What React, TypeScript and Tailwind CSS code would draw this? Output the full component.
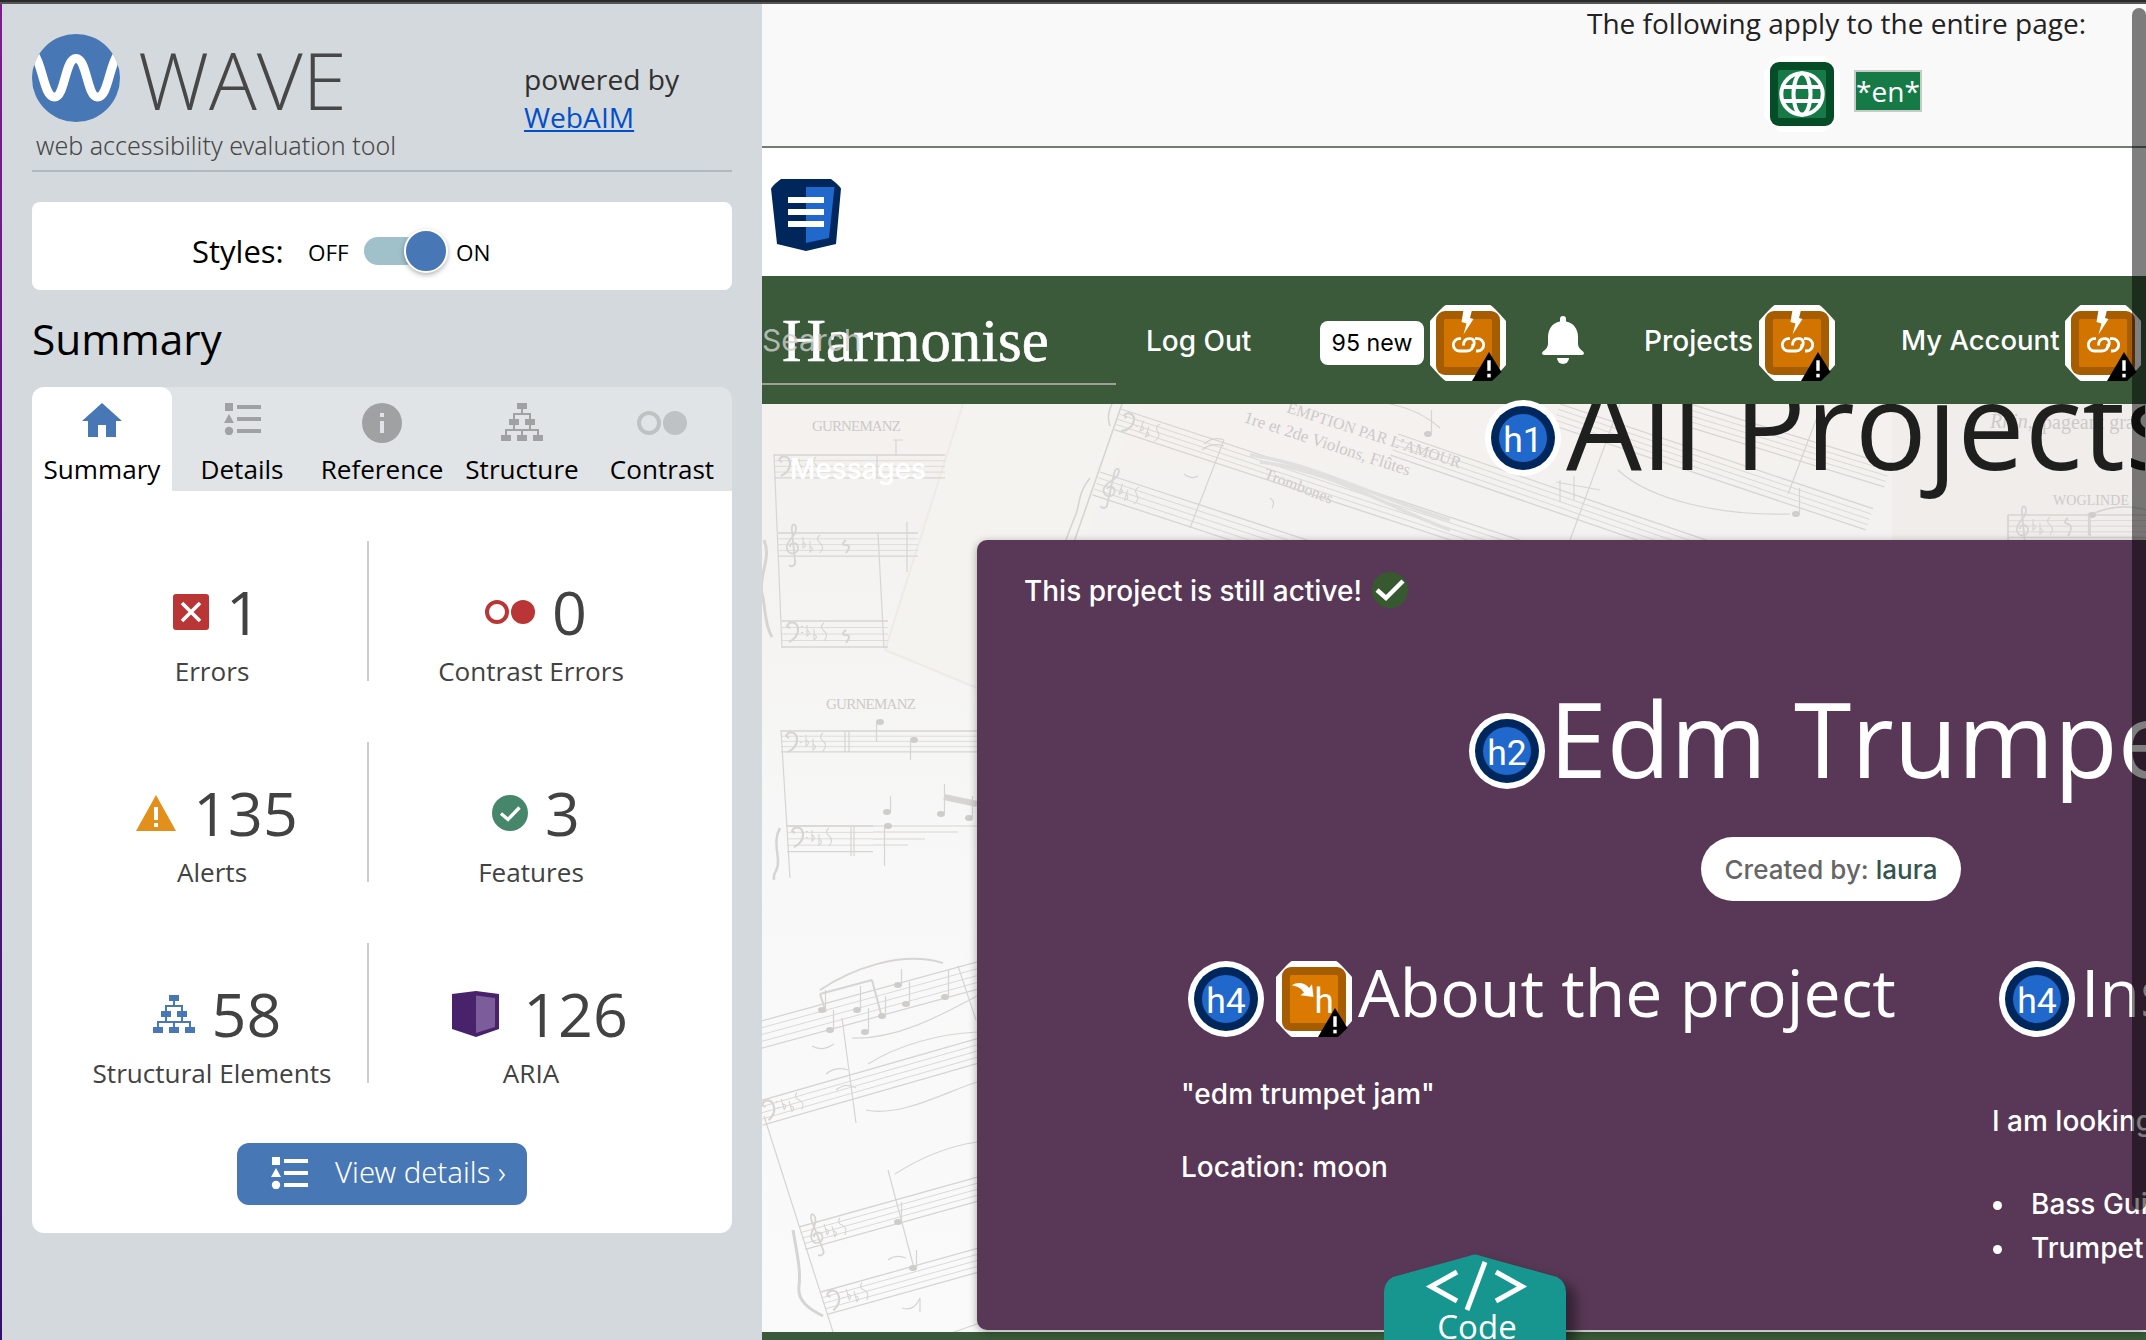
import type { ReactNode } from "react";

const SANS = "font-['Open_Sans','Noto_Sans',sans-serif]";
const UI = "font-['Inter','Liberation_Sans',sans-serif]";

/* ---------- Sidebar icons ---------- */

function WaveLogo() {
  return (
    <svg width="88" height="88" viewBox="0 0 88 88" className="shrink-0">
      <clipPath id="logo-disc">
        <circle cx="44" cy="44" r="44" />
      </clipPath>
      <circle cx="44" cy="44" r="44" fill="#4877b6" />
      <path
        d="M2 20C11 32 12 63 22.500 63S33 24.500 44 24.500 55 63 65.500 63 77 32 86 20"
        fill="none"
        stroke="#fff"
        strokeWidth="9"
        clipPath="url(#logo-disc)"
      />
    </svg>
  );
}

function HomeIcon() {
  return (
    <svg width="40" height="34" viewBox="0 0 40 34" fill="#4877b6">
      <path d="M20 0 40 18H34V34H24V22H16V34H6V18H0Z" />
    </svg>
  );
}

function ListIcon({ color }: { color: string }) {
  return (
    <svg width="37" height="32" viewBox="0 0 37 32" fill={color} className="shrink-0">
      <rect x="1" y="0" width="8" height="8" />
      <path d="M0 20 5 11 10 20Z" />
      <circle cx="5" cy="28" r="4.2" />
      <rect x="13" y="2" width="24" height="4" />
      <rect x="13" y="14" width="24" height="4" />
      <rect x="13" y="26" width="24" height="4" />
    </svg>
  );
}

function InfoIcon() {
  return (
    <svg width="40" height="40" viewBox="0 0 40 40">
      <circle cx="20" cy="20" r="20" fill="#9fa1a3" />
      <rect x="18" y="10" width="4" height="4" fill="#e1e4e6" />
      <rect x="18" y="18" width="4" height="12" fill="#e1e4e6" />
    </svg>
  );
}

function StructureIcon({ color }: { color: string }) {
  return (
    <svg width="42" height="38" viewBox="0 0 42 38" fill={color}>
      <rect x="16" y="0" width="10" height="6" />
      <rect x="8" y="16" width="10" height="6" />
      <rect x="24" y="16" width="10" height="6" />
      <rect x="0" y="32" width="10" height="6" />
      <rect x="16" y="32" width="10" height="6" />
      <rect x="32" y="32" width="10" height="6" />
      <path
        d="M21 5V11M13 17V11H29V17M13 21V27M29 21V27M5 33V27H37V33M21 33V27"
        fill="none"
        stroke={color}
        strokeWidth="2"
      />
    </svg>
  );
}

function ContrastIcon({ color }: { color: string }) {
  return (
    <svg width="50" height="24" viewBox="0 0 50 24">
      <circle cx="12" cy="12" r="10" fill="none" stroke={color} strokeWidth="4" />
      <circle cx="38" cy="12" r="12" fill={color} />
    </svg>
  );
}

function ErrorIcon() {
  return (
    <svg width="36" height="36" viewBox="0 0 36 36">
      <rect width="36" height="36" rx="3" fill="#b93536" />
      <path d="M9 9 27 27M27 9 9 27" stroke="#fff" strokeWidth="3.6" />
    </svg>
  );
}

function AlertIcon() {
  return (
    <svg width="40" height="36" viewBox="0 0 40 36">
      <path d="M20 0 40 36H0Z" fill="#e28f1b" />
      <rect x="18" y="12" width="4" height="13" fill="#fff" />
      <rect x="18" y="28" width="4" height="4" fill="#fff" />
    </svg>
  );
}

function FeatureIcon() {
  return (
    <svg width="36" height="36" viewBox="0 0 36 36">
      <circle cx="18" cy="18" r="18" fill="#46866a" />
      <path d="M9 18.5 16 24.5 27.500 12.500" fill="none" stroke="#fff" strokeWidth="3.4" />
    </svg>
  );
}

function AriaIcon() {
  return (
    <svg width="54" height="46" viewBox="0 0 54 46">
      <path d="M0 3 24 0 47 3V38L24 46 0 38Z" fill="#48226a" />
      <path d="M24 4.500 43 7V36L24 42Z" fill="#7d5c9c" />
    </svg>
  );
}

/* ---------- Page annotation icons ---------- */

const OCTAGON = "M16 0H60Q62 0 76 16V60Q62 76 60 76H16Q14 76 0 60V16Q14 0 16 0Z";

function AlertCorner() {
  return (
    <>
      <path d="M42 76 59 47 71.500 67 62 76Z" fill="#000" />
      <rect x="57.300" y="55.300" width="3.400" height="10.500" fill="#fff" />
      <rect x="57.300" y="68.800" width="3.400" height="3.600" fill="#fff" />
    </>
  );
}

function BrokenLinkIcon() {
  return (
    <svg width="76" height="76" viewBox="0 0 76 76" className="shrink-0">
      <path d={OCTAGON} fill="#fff" />
      <rect x="6" y="6" width="64" height="64" rx="9" fill="#a65c00" />
      <rect x="14" y="14" width="48" height="48" rx="1.500" fill="#d17500" />
      <path d="M33.500 5H42L40 13 43.500 14 33.500 29.500 36.500 18.500 31.500 17Z" fill="#fff" />
      <path
        d="M34.500 46H29.500a6.200 6.200 0 0 1 0-12.400H31M33.500 40.500c0-4.500 2-6.900 6-6.900h.5c5.500 0 5 6.500 2 9.500M45 33.600H47.500a6.200 6.200 0 0 1 0 12.400H46M43 39c0 4.500-2 7-6 7h-3"
        fill="none"
        stroke="#fff"
        strokeWidth="2.800"
      />
      <AlertCorner />
    </svg>
  );
}

function SkippedHeadingIcon() {
  return (
    <svg width="76" height="76" viewBox="0 0 76 76" className="shrink-0">
      <path d={OCTAGON} fill="#fff" />
      <rect x="6" y="6" width="64" height="64" rx="9" fill="#a65c00" />
      <rect x="14" y="14" width="48" height="48" rx="1.500" fill="#db7a00" />
      <path
        d="M16 24.500C21 20.500 29 21.500 33 27L36 23.300 37.500 36 24.500 34.300 28 31.500C25 27 21 25 16 24.500Z"
        fill="#fff"
      />
      <text x="38.500" y="51.700" fontSize="35" fill="#fff" className="font-['Roboto',sans-serif]">
        h
      </text>
      <AlertCorner />
    </svg>
  );
}

function HeadingBadge({ level }: { level: string }) {
  return (
    <svg width="76" height="76" viewBox="0 0 76 76" className="relative shrink-0">
      <circle cx="38" cy="38" r="38" fill="#fff" />
      <circle cx="38" cy="38" r="32" fill="#00275c" />
      <circle cx="38" cy="38" r="24" fill="#2068cc" />
      <text
        x="38"
        y="51.500"
        fontSize="35.500"
        textAnchor="middle"
        fill="#fff"
        className="font-['Roboto',sans-serif]"
      >
        {level}
      </text>
    </svg>
  );
}

function LanguageIcon() {
  return (
    <svg width="76" height="76" viewBox="0 0 76 76" className="shrink-0">
      <path d={OCTAGON} fill="#fff" />
      <rect x="6" y="6" width="64" height="64" rx="9" fill="#044d26" />
      <rect x="14" y="14" width="48" height="48" rx="1.500" fill="#167a47" />
      <g fill="none" stroke="#fff" strokeWidth="4">
        <circle cx="38" cy="38" r="20.700" />
        <ellipse cx="38" cy="38" rx="8.500" ry="20.700" />
        <path d="M19 31H57M19 45H57" />
      </g>
    </svg>
  );
}

function NavigationIcon() {
  return (
    <svg width="70" height="72" viewBox="0 0 70 72">
      <path d="M10 0H60Q68 6 70 9.500L65 65 35 72 6 65 0 9.500Q3 5 10 0Z" fill="#00275c" />
      <path d="M35 8H63.500L58 59 35 64Z" fill="#2068cc" />
      <path d="M17 18H53V24H17ZM17 30H53V36H17ZM17 42H53V48H17Z" fill="#fff" />
    </svg>
  );
}

function BellIcon() {
  return (
    <svg width="42" height="48" viewBox="0 0 42 48" fill="#fff" className="shrink-0">
      <path d="M18 3a3 3 0 0 1 6 0V5.500C32 7 36 13.500 36 21V28C36 31 38 33 41 35.500 43 37.500 41.500 39 40 39H2C.5 39-1 37.500 1 35.500 4 33 6 31 6 28V21C6 13.500 10 7 18 5.500Z" />
      <path d="M15 42H27A6 6 0 0 1 15 42Z" />
    </svg>
  );
}

/* ---------- Sheet music backdrop ---------- */

type StaffProps = { x: number; y: number; w: number; gap: number; angle?: number; clef?: "g" | "f" };

function Staff({ x, y, w, gap, angle = 0, clef }: StaffProps) {
  return (
    <g transform={`translate(${x} ${y}) rotate(${angle})`}>
      {[0, 1, 2, 3, 4].map((i) => (
        <path key={i} d={`M0 ${i * gap}H${w}`} strokeWidth={i % 4 === 0 ? 1.3 : 0.8} />
      ))}
      {clef === "g" && (
        <path
          d="M11 32c3 3 7 0 6-4L14-2c-1-8 4-9 4-2 0 8-11 12-9 20 2 7 12 5 11-2-1-5-8-5-8 0"
          strokeWidth="1.8"
        />
      )}
      {clef === "f" && <path d="M5 6c0-6 11-7 11 3 0 6-5 10-9 12M6 6l2 1M20 5v1M20 11v1" strokeWidth="2.2" />}
      {clef && <path d="M25 4v11q5-3 0-6M32 8v11q5-3 0-6M42 2q-5 4 0 8t0 10" strokeWidth="1.1" />}
    </g>
  );
}

function Note({ x, y, h }: { x: number; y: number; h: number }) {
  return (
    <g>
      <ellipse cx={x} cy={y} rx="4" ry="3" fill="#cfcdcb" stroke="none" />
      <path d={`M${x + (h < 0 ? 3.5 : -3.5)} ${y}v${h}`} />
    </g>
  );
}

function SheetMusic() {
  return (
    <svg
      className="absolute inset-0"
      width="1384"
      height="928"
      viewBox="762 404 1384 928"
      fill="none"
      stroke="#d7d5d3"
      strokeWidth="1.2"
    >
      <defs>
        <linearGradient id="paper" x1="0" y1="0" x2="0" y2="1">
          <stop offset="0" stopColor="#f5f1ee" />
          <stop offset=".12" stopColor="#f3f2f0" />
          <stop offset=".5" stopColor="#f8f8f8" />
          <stop offset="1" stopColor="#fafafa" />
        </linearGradient>
      </defs>
      <rect x="762" y="404" width="1384" height="928" fill="url(#paper)" stroke="none" />
      <path d="M963 404H1140L1075 560H977V688L885 650Z" fill="#f5f3f0" stroke="none" />
      <path d="M963 404 885 650 977 688" stroke="#eeeae6" strokeWidth="2" />
      <path d="M1892 404H2146V560H1892Z" fill="#f0edeb" stroke="none" />

      <g fill="#cccac8" stroke="none" className="font-['Liberation_Serif',serif]">
        <text x="812" y="431" fontSize="15" textLength="89">GURNEMANZ</text>
        <text x="826" y="709" fontSize="15" textLength="90">GURNEMANZ</text>
        <text x="2053" y="505" fontSize="14" textLength="76">WOGLINDE</text>
        <text x="1990" y="428" fontSize="20" fontStyle="italic">Rhin,</text>
        <text x="2042" y="429" fontSize="20">pageant gra</text>
        <text x="1286" y="412" fontSize="16" transform="rotate(18 1286 412)">EMPTION PAR L’AMOUR</text>
        <text x="1243" y="422" fontSize="17" transform="rotate(18 1243 422)">1re et 2de Violons, Flûtes</text>
        <text x="1263" y="478" fontSize="16" transform="rotate(21 1263 478)">Trombones</text>
      </g>

      {/* Left page, level staves */}
      <Staff x={774} y={455} w={171} gap={5.7} clef="f" />
      <Staff x={778} y={533} w={140} gap={5.8} clef="g" />
      <Staff x={782} y={621} w={106} gap={6.5} clef="f" />
      <path d="M774 454 782 648M877 455V478M878 533 884 648M896 440V455M907 522V572M893 440h10" />
      <path d="M764 540c8 18-6 36-2 54 4 14 2 30 10 43" strokeWidth="3" />
      <path d="M846 540q-6 5 0 5t0 8M846 630q-6 5 0 5t0 8" strokeWidth="2" />
      <Staff x={781} y={731} w={196} gap={5.2} clef="f" />
      <Staff x={787} y={826} w={86} gap={6.4} clef="f" />
      <path d="M787 826H977M873 832H958M873 839H925M873 845H908M781 730 790 878M845 731V752M849 731V752M851 826V856M854 826V856" />
      <path d="M780 828c-6 10-3 20-2 32s-6 12-4 20" strokeWidth="2.5" />
      <path d="M944 797 977 804" strokeWidth="6" />
      <Note x={880} y={722} h={20} />
      <Note x={914} y={740} h={20} />
      <Note x={887} y={812} h={-16} />
      <Note x={888} y={826} h={40} />
      <Note x={941} y={814} h={-30} />
      <Note x={969} y={818} h={-22} />

      {/* Left page, tilted staves */}
      <Staff x={754} y={1023} w={240} gap={6.6} angle={-15.3} />
      <Staff x={756} y={1102} w={240} gap={6} angle={-16} clef="f" />
      <Staff x={799} y={1227} w={200} gap={5.8} angle={-15.6} clef="g" />
      <Staff x={821} y={1292} w={180} gap={5.8} angle={-15.6} clef="f" />
      <path d="M764 1116 833 1332M842 1018 856 1123M888 1170 914 1268M958 966 976 1020" />
      <path d="M820 990C850 970 900 950 943 963M820 994 872 980M820 994 826 1012M872 980 881 1014" strokeWidth="2" />
      <path d="M852 1038C900 1040 950 1010 977 996M868 1064C900 1044 940 1034 977 1032M866 1110C900 1118 950 1090 977 1082M895 1174C920 1158 950 1146 977 1142" />
      <path d="M793 1230c4 24 8 40 6 56s12 24 24 30" strokeWidth="3" />
      <path d="M812 1046q10 6 22-2M826 1074q10-8 22-4M836 1090q10-8 20-2M888 1260q8-6 18-2" />
      <path d="M954 1332 977 1324M902 1308q12 4 18-10v14" />
      <Note x={822} y={1010} h={-20} />
      <Note x={830} y={1030} h={-20} />
      <Note x={857} y={1010} h={-24} />
      <Note x={865} y={1032} h={-24} />
      <Note x={898} y={985} h={-16} />
      <Note x={906} y={1004} h={-22} />
      <Note x={945} y={997} h={-28} />
      <Note x={882} y={1016} h={-20} />
      <Note x={898} y={1222} h={-20} />
      <Note x={913} y={1268} h={-18} />

      {/* Upper centre, staves falling to the right */}
      <Staff x={1121} y={409} w={460} gap={5.4} angle={18.2} clef="f" />
      <Staff x={1100} y={472} w={300} gap={6} angle={18.2} clef="g" />
      <path d="M1122 404 1073 545M1112 404q-6 12-2 22M1090 478c-12 14-10 26-14 36s-8 20-10 26" strokeWidth="1.6" />
      <path d="M1224 440 1190 528M1184 474q8 6 14 2M1202 450q10-8 22-4M1204 444q10-8 20-4" />
      <path d="M1250 455C1320 465 1380 500 1450 520M1260 462C1330 470 1390 508 1450 530" strokeWidth="3.500" stroke="#e2e0de" />
      <path d="M1390 404Q1420 410 1440 428M1270 498q6 4 2 10" />
      <Staff x={1398} y={434} w={330} gap={5.6} angle={19} />
      <Staff x={1560} y={404} w={330} gap={5.6} angle={18.5} />
      <Staff x={1690} y={404} w={210} gap={5.6} angle={17} />
      <path d="M1620 404 1570 540M1822 404 1788 494M1618 470C1650 500 1720 516 1790 514M1600 490 1556 482M1560 480v22M1574 476v24" />
      <Note x={1796} y={514} h={-26} />
      <Note x={1428} y={434} h={-24} />

      {/* Right page */}
      <Staff x={2008} y={515} w={140} gap={5.6} clef="g" />
      <path d="M2008 515V540M2068 518q-6 5 0 6t0 12M2090 518v18M2092 514q28-12 54-4" strokeWidth="1.8" />
      <Note x={2092} y={515} h={20} />
    </svg>
  );
}

/* ---------- Sidebar ---------- */

function Tab({ label, active, children }: { label: string; active?: boolean; children: ReactNode }) {
  return (
    <div className={`flex w-[140px] flex-col items-center pt-4 ${active ? "rounded-t-xl bg-white" : ""}`}>
      <div className="h-12">{children}</div>
      <span className="text-[26.1px] leading-9 text-black">{label}</span>
    </div>
  );
}

function Stat({ icon, value, label, divided }: { icon: ReactNode; value: string; label: string; divided?: boolean }) {
  return (
    <div
      className={`flex h-[140px] flex-col items-center pt-[29px] ${
        divided ? "w-[313px] border-r-2 border-[#cbcdcf] pl-px" : "w-[322px]"
      }`}
    >
      <div className="flex h-[84px] items-center gap-[17px] pl-2.5">
        {icon}
        <span className="text-[61px] leading-[84px]">{value}</span>
      </div>
      <span className="-mt-px text-[26.1px] leading-9 whitespace-nowrap">{label}</span>
    </div>
  );
}

function Sidebar() {
  return (
    <aside className={`flex w-[762px] shrink-0 bg-[#d4d9dd] ${SANS}`}>
      <div className="w-0.5 bg-linear-to-b from-[#7d1c8c] to-[#33106c]" />
      <div className="flex w-[760px] flex-col px-[30px]">
        <header className="flex h-[168px] justify-between border-b-2 border-[#b2b9be]">
          <div className="pt-[30px] text-[#474747]">
            <div className="flex gap-[18px]">
              <WaveLogo />
              <span className="mt-[5px] text-[79.6px] leading-[80px] font-light">WAVE</span>
            </div>
            <p className="mt-[9px] ml-1 font-['Noto_Sans',sans-serif] text-[25px] leading-7 font-light">
              web accessibility evaluation tool
            </p>
          </div>
          <div className="w-[208px] pt-14 text-[28.2px] leading-[38px] text-[#303030]">
            <p>powered by</p>
            <a className="text-[#0050cc] underline decoration-2 underline-offset-2">WebAIM</a>
          </div>
        </header>

        <section className="mt-[30px] flex h-[88px] rounded-lg bg-white pt-[29px] pl-40 text-black">
          <div className="flex h-10 items-center">
            <span className="w-[116px] text-[31px] leading-10">Styles:</span>
            <span className="w-14 pt-[3px] text-[22.500px]">OFF</span>
            <span className="flex h-7 w-[81px] items-center">
              <span className="flex h-7 w-[55px] items-center rounded-full bg-[#a0c0ca] pl-10">
                <span className="size-11 shrink-0 rounded-full border-2 border-white bg-[#4877b6] shadow-[0_2px_5px_rgba(0,0,0,0.3)]" />
              </span>
            </span>
            <span className="ml-[11px] pt-[3px] text-[22.500px]">ON</span>
          </div>
        </section>

        <h2 className="mt-[21px] text-[42.400px] leading-[56px] text-black">Summary</h2>

        <nav className="mt-5 flex h-[104px] rounded-t-xl bg-[#e1e4e6]">
          <Tab label="Summary" active>
            <HomeIcon />
          </Tab>
          <Tab label="Details">
            <ListIcon color="#9fa1a3" />
          </Tab>
          <Tab label="Reference">
            <InfoIcon />
          </Tab>
          <Tab label="Structure">
            <StructureIcon color="#9fa1a3" />
          </Tab>
          <Tab label="Contrast">
            <div className="pt-2">
              <ContrastIcon color="#bfc2c3" />
            </div>
          </Tab>
        </nav>

        <section className="flex h-[742px] flex-col items-center rounded-b-xl bg-white pt-[50px] text-[#424242]">
          <div className="grid w-full grid-cols-[314px_322px] gap-y-[61px] pl-6">
            <Stat icon={<ErrorIcon />} value="1" label="Errors" divided />
            <Stat icon={<ContrastIcon color="#b93536" />} value="0" label="Contrast Errors" />
            <Stat icon={<AlertIcon />} value="135" label="Alerts" divided />
            <Stat icon={<FeatureIcon />} value="3" label="Features" />
            <Stat icon={<StructureIcon color="#4877b6" />} value="58" label="Structural Elements" divided />
            <Stat
              icon={
                <span className="pl-2">
                  <AriaIcon />
                </span>
              }
              value="126"
              label="ARIA"
            />
          </div>
          <button className="mt-[60px] flex h-[62px] w-[290px] items-center rounded-xl bg-[#4877b6] pb-0.5 pl-[34px] font-['Noto_Sans',sans-serif] text-[29.3px] font-light text-white">
            <ListIcon color="#fff" />
            <span className="ml-[27px] whitespace-nowrap">View details ›</span>
          </button>
        </section>
      </div>
    </aside>
  );
}

/* ---------- Annotated page ---------- */

function PageStrip() {
  return (
    <div className={`h-36 shrink-0 border-b-2 border-[#6f7f6f] bg-[#f9f9f9] pl-[825px] ${SANS}`}>
      <p className="text-[28px] leading-[38px] whitespace-nowrap text-[#222]">The following apply to the entire page:</p>
      <div className="mt-3.5 ml-[177px] flex gap-3.5">
        <LanguageIcon />
        <span className="mt-3.5 flex h-[42px] w-[68px] items-center justify-center border-2 border-[#c6cbc6] bg-[#167a47] text-[28.1px] leading-[38px] text-white">
          *en*
        </span>
      </div>
    </div>
  );
}

function Navbar() {
  return (
    <nav className={`relative flex h-32 shrink-0 items-center bg-[#3a5a3a] text-[28px] font-medium whitespace-nowrap text-white ${UI}`}>
      <span className="ml-5 w-[364px] pt-0.5 font-['Liberation_Serif',serif] text-[60.800px] leading-[80px] [-webkit-text-stroke:0.6px_white]">
        Harmonise
      </span>
      <span className="w-[174px] pt-0.5">Log Out</span>
      <span className="mt-1.5 flex h-11 w-[104px] items-center justify-center rounded-lg bg-white pt-px text-[23.2px] font-normal text-black">
        95 new
      </span>
      <span className="mt-1.5 ml-1.5">
        <BrokenLinkIcon />
      </span>
      <span className="ml-9">
        <BellIcon />
      </span>
      <span className="ml-[60px] w-[115px] pt-0.5">Projects</span>
      <span className="mt-1.5">
        <BrokenLinkIcon />
      </span>
      <span className="ml-[66px] w-[164px] pt-0.5 text-[27.500px]">My Account</span>
      <span className="mt-1.5">
        <BrokenLinkIcon />
      </span>
      <span className="absolute bottom-[19px] left-0 h-[90px] w-[354px] border-b-2 border-[#9e9e9e] pt-[25px] text-[30px] leading-10 font-normal text-[#d2d2d2]/80">
        Search
      </span>
    </nav>
  );
}

function ProjectCard() {
  return (
    <article className="relative ml-[215px] flex h-[790px] flex-col overflow-hidden rounded-l-[10px] bg-[#583856] text-[28px] leading-9 font-medium whitespace-nowrap text-white shadow-[0_2px_8px_rgba(0,0,0,0.35)]">
      <div className="mt-8 ml-[47px] flex h-9 items-center gap-2.5">
        <span className="pt-0.5">This project is still active!</span>
        <svg width="36" height="40" viewBox="0 0 36 40">
          <circle cx="18" cy="20" r="18" fill="#36592f" />
          <path d="M5 20 14 28 31 11" fill="none" stroke="#fff" strokeWidth="4.500" />
        </svg>
      </div>
      <div className="mt-[77px] ml-[492px] flex font-normal">
        <span className="mt-7">
          <HeadingBadge level="h2" />
        </span>
        <h2 className={`mt-px ml-1 h-[103px] text-[104.100px] leading-[104px] ${SANS}`}>Edm Trumpet Jam</h2>
      </div>
      <p className="mt-12 ml-[724px] flex h-16 w-[260px] shrink-0 items-center justify-center gap-[7px] rounded-full bg-white pt-0.5 text-[26px] text-[#666]">
        Created by: <span className="text-[#33544f]">laura</span>
      </p>
      <div className="mt-[52px] ml-[204px] flex">
        <section className="w-[811px] shrink-0">
          <div className="ml-[7px] flex font-normal">
            <span className="mt-2 flex gap-3">
              <HeadingBadge level="h4" />
              <SkippedHeadingIcon />
            </span>
            <h4 className={`ml-1.5 text-[66.1px] leading-[76px] ${SANS}`}>About the project</h4>
          </div>
          <p className="mt-[39px]">"edm trumpet jam"</p>
          <p className="mt-[37px]">Location: moon</p>
        </section>
        <section className="shrink-0">
          <div className="ml-[7px] flex font-normal">
            <span className="mt-2">
              <HeadingBadge level="h4" />
            </span>
            <h4 className={`ml-1.5 text-[66.1px] leading-[76px] ${SANS}`}>Instruments</h4>
          </div>
          <p className="mt-[66px]">I am looking for:</p>
          <ul className="mt-[43px] leading-[44px]">
            {["Bass Guitar", "Trumpet"].map((name) => (
              <li key={name} className="flex items-center gap-[29px] pl-px">
                <span className="mt-0.5 size-[9px] rounded-full bg-white" />
                {name}
              </li>
            ))}
          </ul>
        </section>
      </div>
    </article>
  );
}

function CodeTab() {
  return (
    <div className="absolute bottom-0 left-[622px] h-[86px] w-[182px]">
      <svg
        width="182"
        height="86"
        viewBox="0 0 182 86"
        className="absolute inset-0 overflow-visible drop-shadow-[10px_8px_6px_rgba(0,0,0,0.4)]"
      >
        <path d="M0 90V38Q0 28 9 23L85 2Q91 -1 97 2L173 23Q182 28 182 38V90Z" fill="#17968f" />
        <path d="M73 18 47 32.500 73 47M112 18 138 32.500 112 47" fill="none" stroke="#fff" strokeWidth="5" />
        <path d="M101 8 83 56" stroke="#fff" strokeWidth="5" />
      </svg>
      <span className={`relative mt-[53px] block pl-1 text-center text-[33px] leading-10 text-white ${SANS}`}>Code</span>
    </div>
  );
}

export default function App() {
  return (
    <div className="flex h-[1340px] w-[2146px] flex-col overflow-hidden bg-white">
      <div className="h-1 shrink-0 border-b-2 border-[#555] bg-[#2b2b2b]" />
      <div className="flex h-[1336px]">
        <Sidebar />
        <main className={`relative flex w-[1384px] flex-col ${UI}`}>
          <PageStrip />
          <div className="h-32 shrink-0 pt-[31px] pl-[9px]">
            <NavigationIcon />
          </div>
          <Navbar />
          <div className="relative h-[928px] shrink-0">
            <SheetMusic />
            <div className="relative flex h-[136px] whitespace-nowrap">
              <span className="mt-[47px] ml-7 w-[695px] text-[27.8px] leading-9 font-medium text-white">Messages</span>
              <span className="-mt-1">
                <HeadingBadge level="h1" />
              </span>
              <div className="ml-[5px] h-[136px] w-[579px] overflow-hidden">
                <h1 className={`-mt-[40px] text-[120px] leading-[120px] text-[#1f1f1d] ${SANS}`}>All Projects</h1>
              </div>
            </div>
            <ProjectCard />
          </div>
          <div className="h-2 shrink-0 bg-[#3a5a3a]" />
          <CodeTab />
          <div className="absolute top-1 right-0 h-[1202px] w-3.5 rounded-full bg-black/50" />
        </main>
      </div>
    </div>
  );
}
